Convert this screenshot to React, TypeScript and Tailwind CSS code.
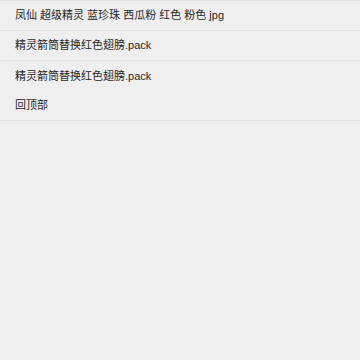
const rows = [
  { text: "凤仙 超级精灵 蓝珍珠 西瓜粉 红色 粉色 jpg", line: true },
  { text: "精灵箭筒替换红色翅膀.pack", line: true },
  { text: "精灵箭筒替换红色翅膀.pack", line: false },
  { text: "回顶部", line: true },
];

export default function App() {
  return (
    <div
      className="w-[360px] h-[360px] bg-[#efefef] text-[#262626] text-[11px]"
      style={{ fontFamily: '"Liberation Sans", "Noto Sans CJK SC", sans-serif' }}
    >
      <div className="border-t border-[#e2e2e2]">
        {rows.map((r, i) => (
          <div
            key={i}
            className={`h-[30px] flex items-center pl-[15px] ${
              r.line ? "border-b border-[#e2e2e2]" : ""
            }`}
          >
            {r.text}
          </div>
        ))}
      </div>
    </div>
  );
}
